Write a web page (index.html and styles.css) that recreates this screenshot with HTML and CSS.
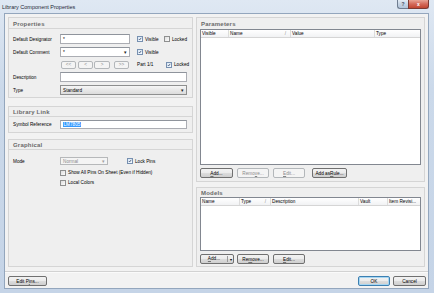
FILE: index.html
```html
<!DOCTYPE html>
<html>
  <head>
    <link rel="stylesheet" href="styles.css">
  </head>
  <body>
    <div class="window">
      <div class="titlebar">
        <span class="title">Library Component Properties</span>
        <div class="caption-buttons">
          <span class="cap-help">?</span>
          <span class="cap-close">x</span>
        </div>
      </div>

      <div class="client">
        <div class="main">
          <div class="col-left">
            <section class="group props">
              <h3 class="group-title">Properties</h3>
              <div class="props-body">
                <div class="row">
                  <span class="lbl">Default Designator</span>
                  <div class="edit w70">*</div>
                  <span class="chk c1"><span class="box on"><svg viewBox="0 0 6 6"><path d="M1.2 3.1 L2.5 4.4 L4.8 1.3" /></svg></span>Visible</span>
                  <span class="chk"><span class="box"></span>Locked</span>
                </div>
                <div class="row">
                  <span class="lbl">Default Comment</span>
                  <div class="edit w70 combo">*<span class="arrow">&#9662;</span></div>
                  <span class="chk c1"><span class="box on"><svg viewBox="0 0 6 6"><path d="M1.2 3.1 L2.5 4.4 L4.8 1.3" /></svg></span>Visible</span>
                </div>
                <div class="row nav-row">
                  <div class="nav">
                    <span class="btn off nb1">&lt;&lt;</span>
                    <span class="btn off nb2">&lt;</span>
                    <span class="btn off nb3">&gt;</span>
                    <span class="btn off nb4">&gt;&gt;</span>
                  </div>
                  <span class="part">Part 1/1</span>
                  <span class="chk"><span class="box on"><svg viewBox="0 0 6 6"><path d="M1.2 3.1 L2.5 4.4 L4.8 1.3" /></svg></span>Locked</span>
                </div>
                <div class="row">
                  <span class="lbl">Description</span>
                  <div class="edit wide"></div>
                </div>
                <div class="row">
                  <span class="lbl">Type</span>
                  <div class="dropdown wide">Standard<span class="arrow">&#9662;</span></div>
                </div>
              </div>
            </section>

            <section class="group link">
              <h3 class="group-title">Library Link</h3>
              <div class="link-body">
                <span class="lbl">Symbol Reference</span>
                <div class="edit wide"><span class="sel">LM7805</span></div>
              </div>
            </section>

            <section class="group graphical">
              <h3 class="group-title">Graphical</h3>
              <div class="graph-body">
                <div class="row mode-row">
                  <span class="lbl">Mode</span>
                  <div class="dropdown disabled">Normal<span class="arrow">&#9662;</span></div>
                  <span class="chk lock"><span class="box on"><svg viewBox="0 0 6 6"><path d="M1.2 3.1 L2.5 4.4 L4.8 1.3" /></svg></span>Lock Pins</span>
                </div>
                <div class="row opt-row first">
                  <span class="chk"><span class="box"></span>Show All Pins On Sheet (Even if Hidden)</span>
                </div>
                <div class="row opt-row">
                  <span class="chk"><span class="box"></span>Local Colors</span>
                </div>
              </div>
            </section>
          </div>

          <div class="col-right">
            <section class="group params">
              <h3 class="group-title plain">Parameters</h3>
              <div class="grid params-grid">
                <div class="grid-head">
                  <span class="hc" style="width: 28px">Visible</span>
                  <span class="hc sorted" style="width: 62px">Name<i>/</i></span>
                  <span class="hc" style="width: 84px">Value</span>
                  <span class="hc last">Type</span>
                </div>
              </div>
              <div class="btn-row">
                <span class="btn pb1"><u>A</u>dd...</span>
                <span class="btn off pb2">Remo<u>v</u>e...</span>
                <span class="btn off pb3"><u>E</u>dit...</span>
                <span class="btn pb4">Add as <u>R</u>ule...</span>
              </div>
            </section>

            <section class="group models">
              <h3 class="group-title">Models</h3>
              <div class="grid models-grid">
                <div class="grid-head">
                  <span class="hc" style="width: 39px">Name</span>
                  <span class="hc sorted" style="width: 31px">Type<i>/</i></span>
                  <span class="hc" style="width: 88px">Description</span>
                  <span class="hc" style="width: 29px">Vault</span>
                  <span class="hc last">Item Revisi...</span>
                </div>
              </div>
              <div class="btn-row">
                <span class="btn split mb1"><span class="split-main"><u>A</u>dd...</span><span class="split-arrow">&#9662;</span></span>
                <span class="btn mb2">Re<u>m</u>ove...</span>
                <span class="btn mb3"><u>E</u>dit...</span>
              </div>
            </section>
          </div>
        </div>

        <div class="footer">
          <span class="btn edit-pins">Edit P<u>i</u>ns...</span>
          <span class="spacer"></span>
          <span class="btn default ok">OK</span>
          <span class="btn cancel">Cancel</span>
        </div>
      </div>
    </div>
  </body>
</html>
```

FILE: styles.css
```css
* {
  box-sizing: border-box;
}

body {
  margin: 0;
  font-family: "Liberation Sans", Arial, sans-serif;
  font-size: 4.7px;
  color: #000;
}

.window {
  width: 434px;
  height: 293px;
  display: flex;
  flex-direction: column;
  background: linear-gradient(to bottom, #dfe8f3, #cbd9ea 30%, #c5d4e7);
}

/* title bar */

.titlebar {
  height: 13px;
  flex: none;
  display: flex;
  justify-content: space-between;
  align-items: flex-start;
}

.title {
  font-size: 5.5px;
  line-height: 14px;
  padding-left: 2px;
  color: #1e2a38;
}

.caption-buttons {
  display: flex;
  margin-right: 5px;
}

.cap-help,
.cap-close {
  height: 9px;
  display: flex;
  align-items: center;
  justify-content: center;
  color: #fff;
  font-weight: bold;
  font-size: 5px;
  border: 1px solid #6f7d90;
  border-top: none;
}

.cap-help {
  width: 11px;
  background: linear-gradient(to bottom, #e3ebf4, #c6d4e4 50%, #b3c4d9);
  border-radius: 0 0 0 3px;
  color: #3c4b5d;
  border-right: none;
}

.cap-close {
  width: 21px;
  background: linear-gradient(to bottom, #e8a495, #d46a5a 50%, #c24531);
  border-color: #7c3a33;
  border-radius: 0 0 3px 0;
}

/* client area */

.client {
  flex: 1;
  margin: 0 5px 4px 4px;
  background: #f2f2f2;
  border: 1px solid #93a6bd;
  display: flex;
  flex-direction: column;
}

.main {
  height: 253px;
  flex: none;
  display: flex;
  gap: 3px;
  padding: 3px 3px 0;
}

.col-left {
  width: 185px;
  display: flex;
  flex-direction: column;
}

.col-right {
  flex: 1;
  display: flex;
  flex-direction: column;
}

.group {
  border: 1px solid #d5d5d5;
  background: #efefef;
  display: flex;
  flex-direction: column;
}

.group-title {
  margin: 0;
  height: 11px;
  line-height: 12px;
  padding-left: 4px;
  font-size: 6px;
  font-weight: bold;
  letter-spacing: 0.2px;
  color: #6a6a6a;
  border-bottom: 1px solid #d5d5d5;
  flex: none;
}

.group-title.plain {
  border-bottom: none;
}

/* form pieces */

.row {
  display: flex;
  align-items: center;
  height: 10px;
}

.lbl {
  width: 47px;
  flex: none;
  white-space: nowrap;
}

.edit,
.dropdown {
  height: 10px;
  border: 1px solid #abadb3;
  border-top-color: #8f949c;
  background: #fff;
  padding-left: 2px;
  display: flex;
  align-items: center;
  position: relative;
  flex: none;
}

.w70 {
  width: 70px;
}

.wide {
  width: 127px;
}

.arrow {
  position: absolute;
  right: 2px;
  top: 0;
  line-height: 8px;
  font-size: 5px;
  color: #222;
}

.dropdown {
  background: linear-gradient(to bottom, #f6f6f6, #e8e8e8 50%, #dcdcdc);
  border-color: #8e8f8f;
}

.dropdown.disabled {
  width: 48px;
  height: 8px;
  background: #f4f4f4;
  border-color: #b6b8ba;
  color: #8a8a8a;
}

.dropdown.disabled .arrow {
  color: #a0a0a0;
  line-height: 6px;
}

.sel {
  background: #3399ff;
  color: #fff;
  padding: 0 0.5px;
}

.chk {
  display: flex;
  align-items: center;
  gap: 2px;
  white-space: nowrap;
}

.chk.c1 {
  margin-left: 7px;
  width: 29px;
}

.box {
  width: 6px;
  height: 6px;
  border: 1px solid #8e8f8f;
  background: linear-gradient(135deg, #dedede, #fbfbfb);
  display: flex;
  flex: none;
}

.box.on {
  background: linear-gradient(135deg, #d8e7f5, #f6faff);
  border-color: #7790b0;
}

.box svg {
  width: 100%;
  height: 100%;
  fill: none;
  stroke: #1b2d52;
  stroke-width: 1;
}

/* properties */

.props {
  height: 81px;
  flex: none;
}

.props-body {
  padding: 5px 5px 0 4px;
  display: flex;
  flex-direction: column;
  gap: 3px;
}

.nav-row {
  height: 9px;
}

.nav {
  width: 124px;
  padding-left: 48px;
  display: flex;
  flex: none;
}

.nav .btn {
  height: 8px;
}

.nb1 {
  width: 15px;
}

.nb2 {
  width: 15px;
  margin-left: 2px;
}

.nb3 {
  width: 16px;
  margin-left: 1px;
}

.nb4 {
  width: 15px;
  margin-left: 4px;
}

.part {
  width: 29px;
  flex: none;
  white-space: nowrap;
}

/* library link */

.link {
  height: 27px;
  margin-top: 8px;
  flex: none;
}

.link .group-title {
  height: 10px;
  line-height: 11px;
}

.link-body {
  padding: 3px 0 0 4px;
  display: flex;
  align-items: center;
}

.link-body .edit {
  height: 9px;
}

/* graphical */

.graphical {
  flex: 1;
  margin-top: 6px;
}

.graphical .group-title {
  height: 10px;
  line-height: 10px;
}

.graph-body {
  padding: 7px 0 0 4px;
}

.mode-row {
  height: 8px;
}

.chk.lock {
  margin-left: 19px;
}

.opt-row {
  height: 7px;
  padding-left: 47px;
  margin-top: 3px;
}

.opt-row.first {
  margin-top: 4px;
}

/* parameter + model grids */

.params {
  height: 165px;
  flex: none;
}

.models {
  flex: 1;
  margin-top: 5px;
}

.models .group-title {
  height: 9px;
  line-height: 10px;
  border-bottom: none;
}

.grid {
  margin: 0 3px;
  border: 1px solid #828790;
  background: #fff;
}

.params-grid {
  height: 136px;
}

.models-grid {
  height: 54px;
}

.grid-head {
  height: 8px;
  display: flex;
  background: linear-gradient(to bottom, #ffffff, #f1f2f4);
  border-bottom: 1px solid #d5d5d5;
}

.hc {
  line-height: 7px;
  padding-left: 1px;
  border-right: 1px solid #dcdcdc;
  white-space: nowrap;
  overflow: hidden;
  display: flex;
  justify-content: space-between;
}

.hc i {
  font-style: normal;
  color: #8a8a8a;
  padding-right: 4px;
}

.hc.last {
  flex: 1;
  border-right: none;
}

.btn-row {
  display: flex;
  margin: 3px 3px 0;
}

/* buttons */

.btn {
  height: 10px;
  display: flex;
  align-items: center;
  justify-content: center;
  border: 1px solid #707070;
  border-radius: 2px;
  background: linear-gradient(to bottom, #f2f2f2, #ebebeb 50%, #dddddd 50%, #cfcfcf);
  white-space: nowrap;
  flex: none;
}

.btn u {
  text-decoration-color: rgba(0, 0, 0, 0.45);
}

.btn.off {
  border-color: #b3b7ba;
  background: #f4f4f4;
  color: #8b8b8b;
}

.pb1 {
  width: 33px;
}

.pb2 {
  width: 32px;
  margin-left: 4px;
}

.pb3 {
  width: 32px;
  margin-left: 4px;
}

.pb4 {
  width: 35px;
  margin-left: 7px;
}

.mb1 {
  width: 34px;
}

.mb2 {
  width: 32px;
  margin-left: 3px;
}

.mb3 {
  width: 32px;
  margin-left: 4px;
}

.split {
  justify-content: flex-start;
}

.split-main {
  width: 27px;
  text-align: center;
  border-right: 1px solid #9a9a9a;
  line-height: 6px;
}

.split-arrow {
  flex: 1;
  text-align: center;
  font-size: 4px;
}

/* footer */

.footer {
  flex: 1;
  margin-top: 4px;
  border-top: 1px solid #d2d2d2;
  box-shadow: inset 0 1px #fafafa;
  display: flex;
  align-items: flex-start;
  padding: 4px 2px 0 3px;
}

.edit-pins {
  width: 39px;
}

.spacer {
  flex: 1;
}

.ok {
  width: 32px;
}

.btn.default {
  border-color: #3c7fb1;
  box-shadow: inset 0 0 0 1px #a6d6f2;
}

.cancel {
  width: 33px;
  margin-left: 3px;
}
```
